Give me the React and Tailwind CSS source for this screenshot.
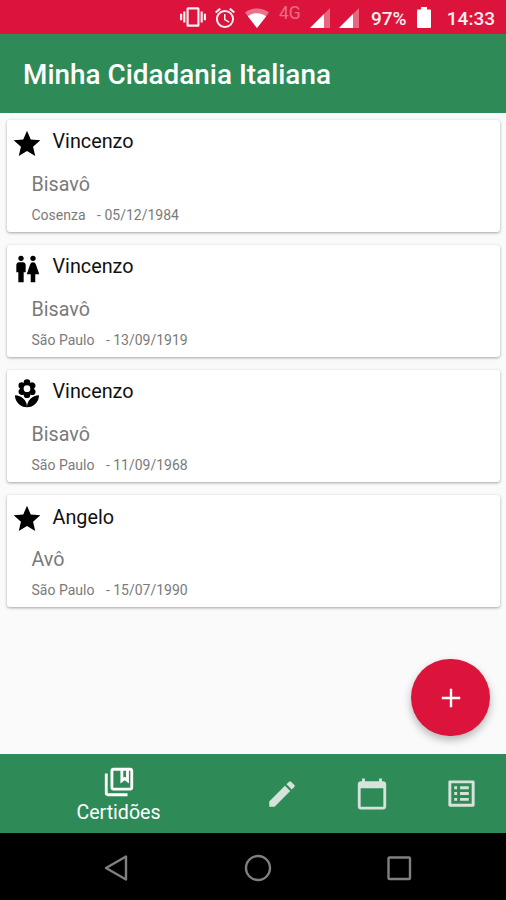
import React from "react";
import { MdStar, MdLocalFlorist, MdEdit, MdCalendarToday, MdListAlt, MdAlarm, MdVibration, MdOutlineCollectionsBookmark } from "react-icons/md";

// man and woman side by side, used for marriage records
function Casal({ className }){
    return (
      <svg viewBox="0 0 24 24" fill="currentColor" className={className}>
        <path d="M5.500 22v-7.500H4V9c0-1.100.9-2 2-2h3c1.100 0 2 .9 2 2v5.500H9.500V22z" />
        <path d="M14.800 22v-6h-3l2.600-7.600A2 2 0 0 1 16.300 7h.4a2 2 0 0 1 1.900 1.400L21.200 16h-3v6z" />
        <circle cx="7.500" cy="4" r="2" />
        <circle cx="16.500" cy="4" r="2" />
      </svg>
    )
}

const certidoes = [
    { id: 1, icon: MdStar, nome: "Vincenzo", grau: "Bisavô", local: "Cosenza", data: "05/12/1984" },
    { id: 2, icon: Casal, nome: "Vincenzo", grau: "Bisavô", local: "São Paulo", data: "13/09/1919" },
    { id: 3, icon: MdLocalFlorist, nome: "Vincenzo", grau: "Bisavô", local: "São Paulo", data: "11/09/1968" },
    { id: 4, icon: MdStar, nome: "Angelo", grau: "Avô", local: "São Paulo", data: "15/07/1990" },
];

function Signal({ className }){
    return (
      <svg viewBox="0 0 20 20" className={className}>
        <path d="M20 0v20H0z" fill="#fff" opacity="0.35" />
        <path d="M14 6v14H0z" fill="#fff" />
      </svg>
    )
}

function StatusBar(){
    return (
    <div className="h-[34px] shrink-0 bg-[#dc143c] flex items-center text-[#fdeef1] pl-[180px] pr-[11px]">
      <MdVibration className="size-[26px] shrink-0" />
      <MdAlarm className="size-[24px] shrink-0 ml-[7px] mt-px" />
      <svg viewBox="0 0 24 20" className="w-[24px] h-[20px] shrink-0 ml-[8px] mt-px">
        <path d="M0 4.500C7-.8 17-.8 24 4.500L12 20z" fill="#fff" opacity="0.4" />
        <path d="M2.800 8.200C8.500 4.300 15.500 4.300 21.200 8.200L12 20z" fill="#fff" />
      </svg>
      <span className="w-[23px] shrink-0 ml-[10px] mb-[7px] text-[17.5px] leading-none opacity-40">4G</span>
      <Signal className="size-[20px] shrink-0 ml-[8px] mt-[2px]" />
      <Signal className="size-[20px] shrink-0 ml-[9px] mt-[2px]" />
      <span className="w-[38px] shrink-0 ml-[12px] mt-[2px] text-[19px] leading-none font-medium">97%</span>
      <svg viewBox="0 0 14 21" className="w-[14px] h-[21px] shrink-0 ml-[8px] mt-px">
        <path d="M4 0h6v2.500h3a1 1 0 0 1 1 1V20a1 1 0 0 1-1 1H1a1 1 0 0 1-1-1V3.500a1 1 0 0 1 1-1h3z" fill="#fff" />
      </svg>
      <span className="ml-auto mt-[2px] text-[19px] leading-none font-medium">14:33</span>
    </div>
    )
}

function Card({ item }){
    const Icon = item.icon;
    return (
    <div className="h-[112px] bg-white rounded-[3px] shadow-[0_1px_3px_rgba(0,0,0,0.35)] pl-[4px]">
      <div className="flex pt-[8px]">
        <Icon className="size-[32px] text-black" />
        <h2 className="ml-[9.5px] mt-[1.5px] text-[19.8px] leading-[26px] text-[#111]">{item.nome}</h2>
      </div>
      <p className="pl-[20.5px] mt-[12px] text-[19.7px] leading-[26px] text-[#7a7a7a]">{item.grau}</p>
      <p className="pl-[20.5px] mt-[8px] text-[14px] leading-[18px] text-[#7a7a7a] flex">
        <span>{item.local}</span>
        <span className="ml-[11.5px]">- {item.data}</span>
      </p>
    </div>
    )
}

function App(){
    return (
    <div className="w-[506px] h-[900px] flex flex-col bg-[#fafafa] font-['Roboto',sans-serif] overflow-hidden relative">
      <StatusBar />
      <header className="h-[79px] shrink-0 bg-[#2e8b57] flex items-center pl-[23px] pt-[3px]">
        <h1 className="text-[27.9px] leading-none font-medium text-white whitespace-nowrap">Minha Cidadania Italiana</h1>
      </header>

      <main className="flex-1 flex flex-col gap-[13.2px] pt-[6.5px] pl-[7px] pr-[6px]">
        {certidoes.map((item) => (
          <Card key={item.id} item={item} />
        ))}
      </main>

      <button aria-label="Adicionar" className="absolute left-[411px] top-[659px] w-[79px] h-[77px] rounded-full bg-[#dc143c] shadow-[0_4px_8px_rgba(0,0,0,0.28)] flex items-center justify-center">
        <svg viewBox="0 0 20 20" className="size-[20px]">
          <path d="M10 .8v18.400M.8 10h18.400" stroke="#fff" strokeWidth="2.400" />
        </svg>
      </button>

      <nav className="h-[79px] shrink-0 bg-[#2e8b57] flex">
        <div className="w-[237px] flex flex-col items-center pt-[11px] text-white">
          <MdOutlineCollectionsBookmark className="size-[34px]" />
          <span className="mt-[3px] text-[19.6px] leading-[22px]">Certidões</span>
        </div>
        <div className="w-[90px] flex items-center justify-center text-[#d5e3da]">
          <MdEdit className="size-[34px]" />
        </div>
        <div className="w-[90px] flex items-center justify-center text-[#d5e3da]">
          <MdCalendarToday className="size-[34px]" />
        </div>
        <div className="w-[89px] flex items-center justify-center text-[#d5e3da]">
          <MdListAlt className="size-[35px]" />
        </div>
      </nav>

      <div className="h-[67px] shrink-0 bg-black flex items-center justify-between pl-[103px] pr-[94px] pt-[2px]">
        <svg viewBox="0 0 26 28" className="w-[26px] h-[28px]">
          <path d="M23 2.500v23L3 14z" fill="none" stroke="#808080" strokeWidth="2.400" strokeLinejoin="round" />
        </svg>
        <svg viewBox="0 0 28 28" className="size-[28px]">
          <circle cx="14" cy="14" r="12" fill="none" stroke="#808080" strokeWidth="2.400" />
        </svg>
        <svg viewBox="0 0 26 26" className="size-[26px]">
          <rect x="2.500" y="2.500" width="21.500" height="21.500" rx="1" fill="none" stroke="#808080" strokeWidth="2.400" />
        </svg>
      </div>
    </div>
    )
};

export default App;
